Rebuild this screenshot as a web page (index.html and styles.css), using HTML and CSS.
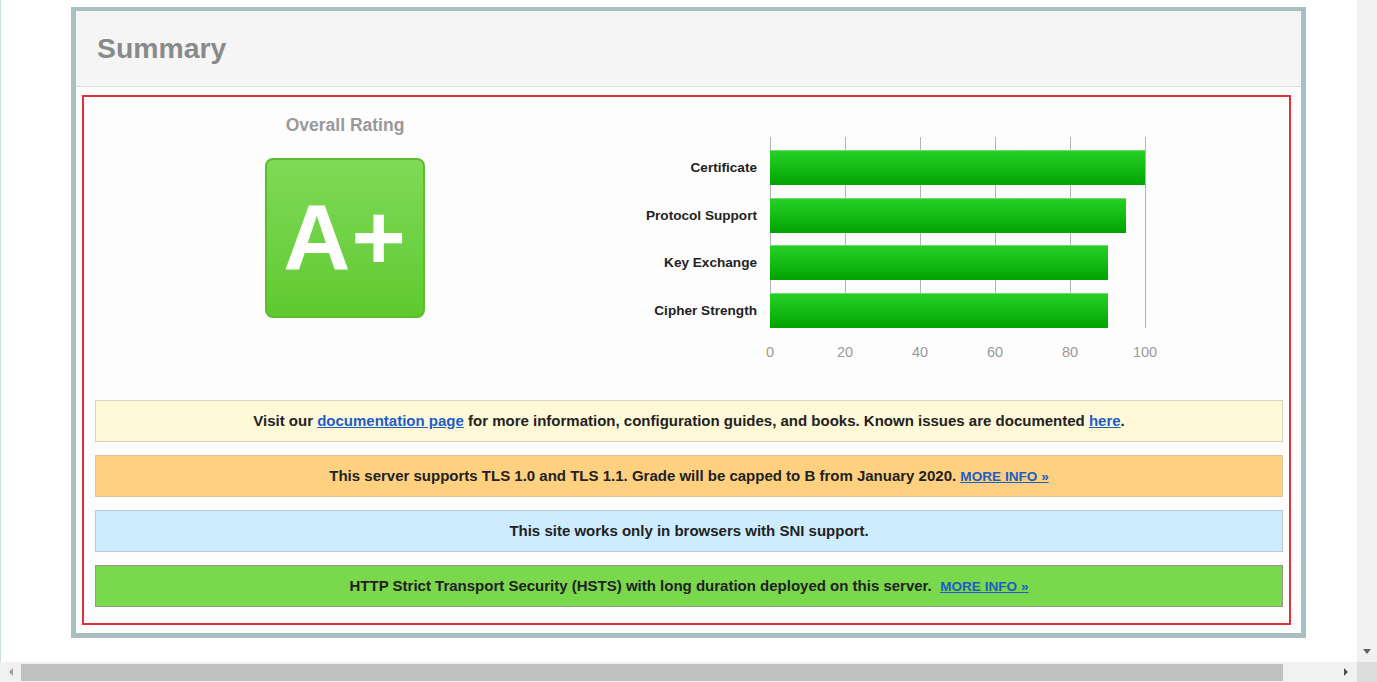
FILE: index.html
```html
<!DOCTYPE html>
<html lang="en">
<head>
<meta charset="utf-8">
<title>SSL Report - Summary</title>
<link rel="stylesheet" href="styles.css">
</head>
<body>
<div class="screen">
  <div class="viewport">
    <div class="panel">
      <div class="panel-head">Summary</div>
      <div class="panel-body">
        <div class="highlight">
          <div class="top">
            <div class="rating">
              <div class="rating-title">Overall Rating</div>
              <div class="grade">A+</div>
            </div>
            <div class="chart">
              <div class="chart-main">
                <div class="chart-labels">
                  <div class="chart-label">Certificate</div>
                  <div class="chart-label">Protocol Support</div>
                  <div class="chart-label">Key Exchange</div>
                  <div class="chart-label">Cipher Strength</div>
                </div>
                <div class="plot">
                  <div class="bar" style="width:375px"></div>
                  <div class="bar" style="width:356.25px"></div>
                  <div class="bar" style="width:337.5px"></div>
                  <div class="bar" style="width:337.5px"></div>
                </div>
              </div>
              <div class="axis">
                <span>0</span><span>20</span><span>40</span><span>60</span><span>80</span><span>100</span>
              </div>
            </div>
          </div>
          <div class="notice notice-yellow">Visit our <a href="#">documentation page</a> for more information, configuration guides, and books. Known issues are documented <a href="#">here</a>.</div>
          <div class="notice notice-orange">This server supports TLS 1.0 and TLS 1.1. Grade will be capped to B from January 2020. <a class="more" href="#">MORE INFO »</a></div>
          <div class="notice notice-blue">This site works only in browsers with SNI support.</div>
          <div class="notice notice-green">HTTP Strict Transport Security (HSTS) with long duration deployed on this server. &nbsp;<a class="more" href="#">MORE INFO »</a></div>
        </div>
      </div>
    </div>
  </div>
  <div class="vscroll">
    <svg class="arrow-down" width="10" height="6" viewBox="0 0 10 6"><polygon points="1,0 9,0 5,5" fill="#606060"/></svg>
  </div>
  <div class="hscroll">
    <svg class="arrow" width="6" height="10" viewBox="0 0 6 10"><polygon points="5,1 5,9 1,5" fill="#a0a0a0"/></svg>
    <div class="thumb"></div>
    <svg class="arrow arrow-right" width="6" height="10" viewBox="0 0 6 10"><polygon points="1,1 1,9 5,5" fill="#505050"/></svg>
  </div>
  <div class="corner"></div>
</div>
</body>
</html>
```
FILE: styles.css
```css
html, body {
  margin: 0;
  padding: 0;
  background: #ffffff;
  overflow: hidden;
}

body {
  font-family: "Liberation Sans", Arial, Helvetica, sans-serif;
  color: #222222;
}

.screen {
  display: grid;
  grid-template-columns: 1357px 20px;
  grid-template-rows: 662px 20px;
  width: 1377px;
  height: 682px;
}

.viewport {
  overflow: hidden;
  border-left: 1px solid #cddde2;
  padding: 7px 0 0 70px;
  background: #ffffff;
}

.panel {
  width: 1225px;
  border: 5px solid #a9c0c3;
  border-top-width: 4px;
  background: #fdfdfd;
}

.panel-head {
  height: 76px;
  box-sizing: border-box;
  display: flex;
  align-items: center;
  padding-left: 21px;
  padding-top: 0;
  background: #f5f5f5;
  border-bottom: 1px solid #dcdcdc;
  font-size: 28.4px;
  font-weight: bold;
  color: #8a8a8a;
}

.panel-body {
  padding: 8px 10px 8px 6px;
}

.highlight {
  border: 2px solid #e3303b;
  padding: 0 6px 16px 11px;
}

.top {
  display: flex;
  height: 303px;
}

.rating {
  width: 522px;
  margin-left: -11px;
  display: flex;
  flex-direction: column;
  align-items: center;
}

.rating-title {
  margin-top: 18px;
  line-height: 20px;
  font-size: 17.5px;
  font-weight: bold;
  color: #999999;
}

.grade {
  margin-top: 23px;
  width: 160px;
  height: 160px;
  box-sizing: border-box;
  border: 2px solid #5cbd2e;
  border-radius: 8px;
  background: linear-gradient(to bottom, #7fd955 0%, #6ed143 55%, #60c92e 100%);
  color: #ffffff;
  font-size: 93px;
  font-weight: bold;
  line-height: 154px;
  text-align: center;
  letter-spacing: 1px;
}

.chart {
  margin-left: 14px;
  padding-top: 40px;
}

.chart-main {
  display: flex;
}

.chart-labels {
  width: 150px;
  box-sizing: border-box;
  padding: 13px 13px 0 0;
  display: flex;
  flex-direction: column;
  gap: 12.5px;
}

.chart-label {
  height: 35px;
  line-height: 35px;
  text-align: right;
  font-size: 13.6px;
  font-weight: bold;
  color: #222222;
  white-space: nowrap;
}

.plot {
  width: 376px;
  height: 190.5px;
  box-sizing: border-box;
  padding-top: 13px;
  display: flex;
  flex-direction: column;
  gap: 12.5px;
  background-image: linear-gradient(to right, #b4b4b4 1px, transparent 1px);
  background-size: 75px 100%;
}

.bar {
  height: 35px;
  background: linear-gradient(to bottom, #26d026 0%, #14bb14 50%, #00a300 100%);
  border-top: 1px solid #6fd86f;
  box-sizing: border-box;
}

.axis {
  display: grid;
  grid-template-columns: repeat(6, 75px);
  margin-left: 112.5px;
  margin-top: 16px;
  font-size: 14.5px;
  line-height: 16px;
  color: #9a9a9a;
  text-align: center;
}

.notice {
  height: 42px;
  box-sizing: border-box;
  line-height: 40px;
  margin-bottom: 13px;
  border: 1px solid #cccccc;
  text-align: center;
  font-size: 15px;
  font-weight: bold;
  color: #222222;
  white-space: nowrap;
}

.notice:last-child {
  margin-bottom: 0;
}

.notice a {
  color: #1c5dc8;
  text-decoration: underline;
}

.notice a.more {
  font-size: 13.6px;
}

.notice-yellow {
  background: #fff9d7;
  border-color: #d7d3bf;
}

.notice-orange {
  background: #ffd07f;
  border-color: #d9c4a0;
}

.notice-blue {
  background: #cdedfe;
  border-color: #b9c9d3;
}

.notice-green {
  background: #7ad84c;
  border-color: #8f9a88;
}

.vscroll {
  background: #f1f1f1;
  display: flex;
  flex-direction: column;
  justify-content: flex-end;
  align-items: center;
  padding-bottom: 7px;
  box-sizing: border-box;
}

.hscroll {
  background: #f1f1f1;
  display: flex;
  align-items: center;
  padding: 0 8px 0 8px;
  gap: 7px;
}

.thumb {
  width: 1262px;
  height: 17px;
  background: #c1c1c1;
}

.arrow-right {
  margin-left: auto;
}

.corner {
  background: #dcdcdc;
}
```
